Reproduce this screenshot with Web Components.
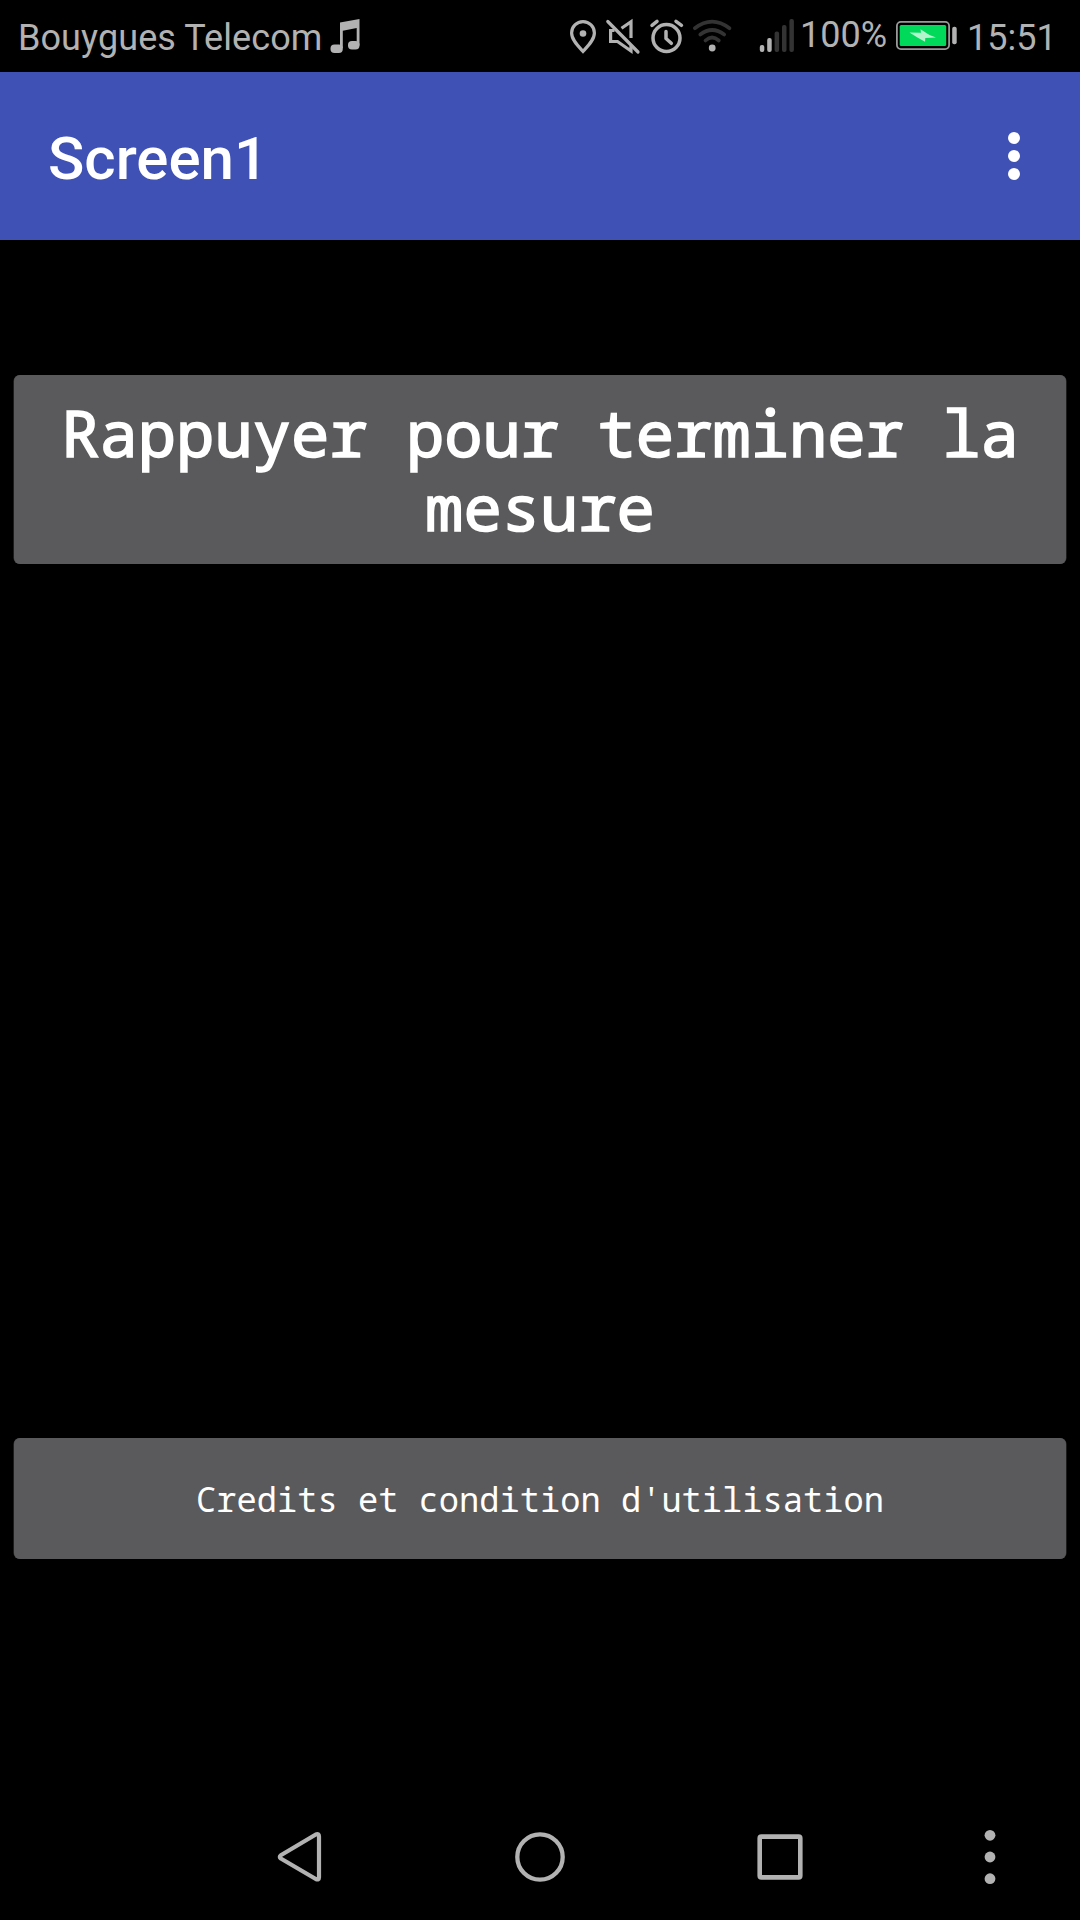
<!DOCTYPE html>
<html lang="fr">
<head>
<meta charset="utf-8">
<title>Screen1</title>
<style>
html,body{margin:0;background:#000}
</style>
</head>
<body>
<phone-screen>
  <status-bar slot="status" carrier="Bouygues Telecom" level="100%" time="15:51"></status-bar>
  <app-bar slot="bar">Screen1</app-bar>
  <app-button class="main" size="large">Rappuyer pour terminer la mesure</app-button>
  <app-button size="small">Credits et condition d'utilisation</app-button>
  <nav-bar slot="nav"></nav-bar>
</phone-screen>
<script>
const define = (name, html, init) => customElements.define(name, class extends HTMLElement {
  constructor() {
    super();
    this.attachShadow({mode: 'open'}).innerHTML = html;
  }
  connectedCallback() { if (init) init(this, this.shadowRoot); }
});

define('phone-screen', `<style>
:host{display:flex;flex-direction:column;width:1080px;height:1920px;background:#000;overflow:hidden}
main{flex:1;display:flex;flex-direction:column;justify-content:space-between;padding:135px 14px 235px;box-sizing:border-box}
</style>
<slot name="status"></slot><slot name="bar"></slot><main><slot></slot></main><slot name="nav"></slot>`);

define('status-bar', `<style>
:host{display:flex;height:72px;background:#000;color:#b2b2b2;font:36px/72px Roboto,sans-serif;white-space:nowrap}
svg{display:block;height:72px;flex:none}
.carrier{margin-left:18px;width:306px;padding-top:2px;box-sizing:border-box;letter-spacing:.08px}
.gap{flex:1}
.level{width:93px;padding-left:1px;margin-top:-1px}
.time{width:113px;padding:2px 0 0 1px}
</style>
<span class="carrier"></span>
<svg width="46" viewBox="324 0 46 72" fill="#b2b2b2"><path d="M340 22.5 359.5 19V45.5H356.700V28L342.800 30.700V48H340Z"/><rect x="330.500" y="44.500" width="12.300" height="8.500" rx="4"/><rect x="348" y="41" width="11.500" height="8.500" rx="4"/></svg>
<span class="gap"></span>
<svg width="40" viewBox="563 0 40 72" fill="none" stroke="#b2b2b2" stroke-width="3.2"><path d="M583 51.500C577.500 45.500 571.600 39.500 571.600 33A11.400 11.400 0 0 1 594.400 33C594.400 39.500 588.500 45.500 583 51.500Z"/><circle cx="583" cy="33.500" r="3.300" fill="#b2b2b2" stroke="none"/></svg>
<svg width="43" viewBox="603 0 43 72" fill="none" stroke="#b2b2b2" stroke-width="3.200"><path d="M614.500 30.500H610.600V41.500H617.500L631 51V45.500M621.500 28.300 631 21.800V38"/><path d="M607.800 21.500 638 52" stroke-linecap="round"/></svg>
<svg width="44" viewBox="646 0 44 72" fill="none" stroke="#b2b2b2" stroke-width="3.500" stroke-linecap="round" stroke-linejoin="round"><circle cx="666.500" cy="38" r="13.500"/><path d="M652 25.300 657 21.300M676 21.300 681.500 25.300M666 31.500V38.500L671.300 43.300"/></svg>
<svg width="62" viewBox="690 0 62 72" fill="none" stroke="#333" stroke-width="3.700" stroke-linecap="round"><path d="M694.800 28.200Q712 15 729.500 28.200M700.300 34.500Q712 25.500 724.200 34.500M705.500 40.500Q712 34.500 718.800 40.500"/><circle cx="712.200" cy="48" r="3.400" fill="#b2b2b2" stroke="none"/></svg>
<svg width="47" viewBox="752 0 47 72" fill="#333"><g fill="#b2b2b2"><rect x="759.800" y="45" width="4.500" height="7" rx="2"/><rect x="767.200" y="38" width="4.500" height="14" rx="2"/></g><rect x="774.600" y="31.500" width="4.500" height="20.500" rx="2"/><rect x="782" y="25" width="4.500" height="27" rx="2"/><rect x="789.400" y="19" width="4.500" height="33" rx="2"/></svg>
<span class="level"></span>
<svg width="73" viewBox="893 0 73 72"><rect x="896.900" y="21.900" width="52.200" height="27.200" rx="4" fill="none" stroke="#999" stroke-width="1.800"/><rect x="899.700" y="25" width="46.500" height="21" rx="1.500" fill="#00d95a"/><path d="M909.500 32.500 921 32.700 920.500 29.300 929.500 35 936 37.500 925.300 38 925 41.700 917 37.300Z" fill="#b3f4cd"/><rect x="952.200" y="26.700" width="4.500" height="17.500" rx="2" fill="#b2b2b2"/></svg>
<span class="time"></span>`, (h, r) => {
  for (const c of ['carrier', 'level', 'time']) r.querySelector('.' + c).textContent = h.getAttribute(c);
});

define('app-bar', `<style>
:host{display:flex;align-items:center;justify-content:space-between;height:168px;padding:0 48px;box-sizing:border-box;background:#3f51b5;color:#fff;font:500 60px/70px Roboto,sans-serif}
span{padding-top:6px}
svg{display:block}
</style><span><slot></slot></span>
<svg width="36" height="60" viewBox="0 0 36 60" fill="#fff"><circle cx="18" cy="12" r="6"/><circle cx="18" cy="30" r="6"/><circle cx="18" cy="48" r="6"/></svg>`);

define('app-button', `<style>
:host{display:block}
button{display:flex;align-items:center;justify-content:center;width:100%;border:0;margin:0;border-radius:6px;background:#5a5a5c;box-shadow:-.5px 0 #3a3a3b,.5px 0 #3a3a3b;color:#fff;font-family:"Droid Sans Mono","Noto Sans Mono","DejaVu Sans Mono",monospace;text-align:center}
:host([size=large]) button{height:189px;padding:1px 36px 0;font-size:63.850px;line-height:74px;-webkit-text-stroke:1.700px #fff}
:host([size=small]) button{height:121px;padding:0 36px;font-size:33.730px;line-height:40px}
</style><button><span><slot></slot></span></button>`);

define('nav-bar', `<style>
:host{display:flex;height:126px;background:#000}
svg{display:block;flex:none}
</style>
<svg width="420" height="126" viewBox="0 1794 420 126" fill="none" stroke="#b2b2b2" stroke-width="4.200" stroke-linejoin="round"><path d="M280.800 1855.300 315.800 1834.500Q319 1833.300 319 1836.500V1877.500Q319 1880.500 315.800 1879L280.800 1858.500Q278.800 1857 280.800 1855.300Z"/></svg>
<svg width="240" height="126" viewBox="420 1794 240 126" fill="none" stroke="#b2b2b2" stroke-width="4.300"><circle cx="540" cy="1857" r="22.700"/></svg>
<svg width="240" height="126" viewBox="660 1794 240 126" fill="#b2b2b2" fill-rule="evenodd"><path d="M761.400 1834.200H798.600A4 4 0 0 1 802.600 1838.200V1875.700A4 4 0 0 1 798.600 1879.700H761.400A4 4 0 0 1 757.400 1875.700V1838.200A4 4 0 0 1 761.400 1834.200ZM762 1839V1875H798V1839Z"/></svg>
<svg width="180" height="126" viewBox="900 1794 180 126" fill="#b2b2b2"><circle cx="990" cy="1835.300" r="5.400"/><circle cx="990" cy="1857" r="5.400"/><circle cx="990" cy="1878.700" r="5.400"/></svg>`);
</script>
</body>
</html>
